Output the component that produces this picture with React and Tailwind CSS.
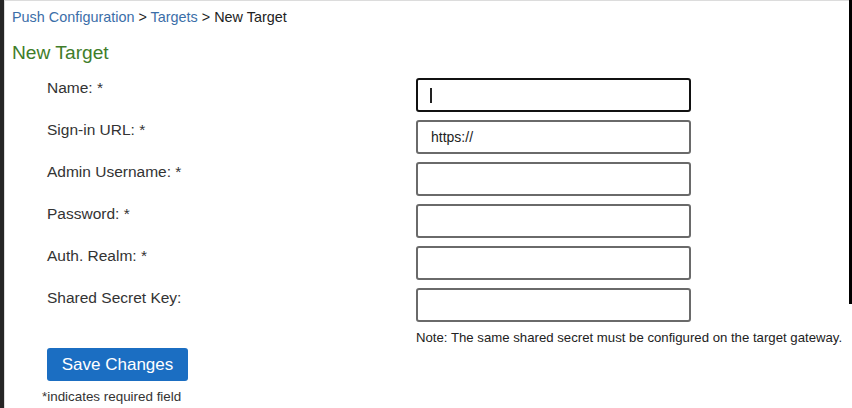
import { useState } from "react";

const fields = [
  { key: "name", label: "Name: *", focused: true },
  { key: "url", label: "Sign-in URL: *", initial: "https://" },
  { key: "admin", label: "Admin Username: *" },
  { key: "password", label: "Password: *", type: "password" },
  { key: "realm", label: "Auth. Realm: *" },
  { key: "secret", label: "Shared Secret Key:", type: "password" },
];

function Field({ field, value, onChange }) {
  return (
    <>
      <label className="h-[34px] leading-[20px] text-[15.5px] text-[#333]">{field.label}</label>
      <div className="relative h-[34px]">
        <input
          type={field.type || "text"}
          value={value}
          onChange={(e) => onChange(field.key, e.target.value)}
          className={
            field.focused
              ? "w-full h-full rounded-[3px] border-2 border-[#111] px-[13px] text-[14px] text-[#222] outline-none"
              : "w-full h-full rounded-[3px] border-2 border-[#6a6a6a] px-[13px] text-[14px] text-[#222] outline-none"
          }
        />
        {/* caret of the focused field */}
        {field.focused && !value && (
          <span className="absolute left-[14px] top-[10px] w-[1.5px] h-[15px] bg-[#222]" />
        )}
      </div>
    </>
  );
}

export default function App() {
  const [values, setValues] = useState(
    Object.fromEntries(fields.map((f) => [f.key, f.initial || ""]))
  );

  const handleChange = (key, v) => setValues((prev) => ({ ...prev, [key]: v }));

  return (
    <div className="w-[852px] h-[408px] flex bg-white overflow-hidden" style={{ fontFamily: '"Liberation Sans", Arial, sans-serif' }}>
      <div className="w-[4px] shrink-0 bg-[#262626]" />
      <div className="flex-1 flex flex-col pl-[7px] border-l border-t border-[#dcdcdc]">
        {/* Breadcrumb */}
        <nav className="mt-[6px] leading-[20px] text-[14.4px] text-[#222]">
          <a href="#" className="text-[#3b6ea8]">Push Configuration</a>
          {" > "}
          <a href="#" className="text-[#3b6ea8]">Targets</a>
          {" > "}
          <span>New Target</span>
        </nav>

        <h1 className="mt-[14px] leading-[24px] text-[19.2px] text-[#3f7d2a]">New Target</h1>

        <form className="mt-[13px] pl-[35px]" onSubmit={(e) => e.preventDefault()}>
          <div className="grid grid-cols-[369px_275px] gap-y-[8px]">
            {fields.map((f) => (
              <Field key={f.key} field={f} value={values[f.key]} onChange={handleChange} />
            ))}
          </div>
          <p className="ml-[369px] mt-[7px] leading-[18px] text-[13.2px] text-[#222] whitespace-nowrap">
            Note: The same shared secret must be configured on the target gateway.
          </p>
          <button
            type="submit"
            className="mt-[1px] w-[141px] h-[33px] rounded-[3px] bg-[#1b6ec2] text-white text-[17px]"
          >
            Save Changes
          </button>
          <p className="-ml-[5px] mt-[7px] leading-[18px] text-[13.4px] text-[#333]">*indicates required field</p>
        </form>
      </div>
      <div className="w-[3px] h-[304px] shrink-0 bg-black" />
    </div>
  );
}
